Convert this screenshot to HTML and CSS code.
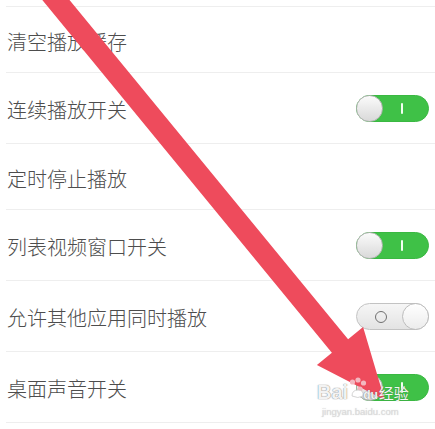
FILE: index.html
```html
<!DOCTYPE html>
<html lang="zh-CN">
<head>
<meta charset="utf-8">
<title>播放设置</title>
<link rel="stylesheet" href="styles.css">
</head>
<body>
<div class="screen">
  <ul class="settings">
    <li class="row row--plain"><span class="label">清空播放缓存</span></li>
    <li class="row"><span class="label">连续播放开关</span><span class="switch switch--on"><span class="knob"></span><span class="mark-on"></span></span></li>
    <li class="row row--plain"><span class="label">定时停止播放</span></li>
    <li class="row"><span class="label">列表视频窗口开关</span><span class="switch switch--on"><span class="knob"></span><span class="mark-on"></span></span></li>
    <li class="row"><span class="label">允许其他应用同时播放</span><span class="switch switch--off"><span class="mark-off"></span><span class="knob"></span></span></li>
    <li class="row"><span class="label">桌面声音开关</span><span class="switch switch--on"><span class="knob"></span><span class="mark-on"></span></span></li>
  </ul>

  <svg class="arrow" width="435" height="429" viewBox="0 0 435 429" aria-hidden="true">
    <polygon points="55.8,-16.7 348.1,339.3 363.1,326.9 384.7,399.9 316.9,365.1 331.9,352.7 39.6,-3.3" fill="#ee4b5c"/>
  </svg>

  <div class="watermark">
    <div class="wm-brand">
      <span class="wm-bai">Bai</span>
      <svg class="wm-paw" width="18" height="22" viewBox="0 0 18 22" aria-hidden="true">
        <circle cx="3.5" cy="5" r="2.6" fill="#f3b8c0"/>
        <circle cx="9" cy="3" r="2.6" fill="#f3b8c0"/>
        <circle cx="14.5" cy="6" r="2.6" fill="#f3b8c0"/>
        <circle cx="11" cy="12" r="2.6" fill="#f3b8c0"/>
        <path d="M3 19 q0-6 6-6 q6 0 5 6 q-5 3-11 0z" fill="#ffffff" stroke="#c9c9c9" stroke-width="0.8"/>
      </svg>
      <span class="wm-du">du</span>
      <span class="wm-jy">经验</span>
    </div>
    <div class="wm-url">jingyan.baidu.com</div>
  </div>
</div>
</body>
</html>
```

FILE: styles.css
```css
html, body {
  margin: 0;
  padding: 0;
  background: #ffffff;
}

.screen {
  position: relative;
  width: 435px;
  height: 429px;
  overflow: hidden;
  background: #ffffff;
  font-family: "Noto Sans CJK SC", "Noto Sans", sans-serif;
}

.settings {
  list-style: none;
  margin: 6px 0 0 6px;
  padding: 0;
  border-top: 1px solid #eeeeee;
}

.row {
  display: flex;
  align-items: center;
  justify-content: space-between;
  height: 70px;
  padding: 0 6px 0 1px;
  border-bottom: 1px solid #eeeeee;
}

.row--plain {
  height: 65px;
}

.label {
  font-size: 20px;
  line-height: 24px;
  padding-top: 4px;
  color: #4d4d4d;
  font-weight: 300;
}

.switch {
  box-sizing: border-box;
  display: flex;
  align-items: center;
  width: 73px;
  height: 27px;
  border-radius: 14px;
  margin-top: 1px;
}

.switch--on {
  background: #3fc147;
  border: 1px solid #3ab842;
}

.switch--off {
  background: linear-gradient(#f6f6f6, #e3e3e3);
  border: 1px solid #c3c3c3;
}

.knob {
  box-sizing: border-box;
  flex: none;
  width: 27px;
  height: 27px;
  border-radius: 50%;
  background: linear-gradient(#fbfbfb, #d9d9d9);
  border: 1px solid #b4b4b4;
  margin: -1px;
}

.switch--off .knob {
  background: linear-gradient(#ffffff, #ececec);
  border-color: #bdbdbd;
}

.mark-on {
  width: 2px;
  height: 11px;
  margin-left: 19px;
  background: #f2fff2;
  border-radius: 1px;
}

.mark-off {
  box-sizing: border-box;
  flex: none;
  width: 12px;
  height: 12px;
  margin-left: 18px;
  margin-right: auto;
  border-radius: 50%;
  border: 1.8px solid #707070;
}

.arrow {
  position: absolute;
  left: 0;
  top: 0;
}

.watermark {
  position: absolute;
  left: 317px;
  top: 377px;
  display: flex;
  flex-direction: column;
  align-items: flex-start;
}

.wm-brand {
  display: flex;
  align-items: flex-end;
  height: 26px;
}

.wm-bai,
.wm-du {
  font-family: "Liberation Sans", Arial, sans-serif;
  font-weight: bold;
  color: rgba(255, 255, 255, 0.92);
  text-shadow: 0 0 1px rgba(120, 120, 120, 0.8), 0 0 1px rgba(120, 120, 120, 0.8);
}

.wm-bai {
  font-size: 20px;
  line-height: 22px;
}

.wm-paw {
  margin: 0 -4px 0 1px;
  align-self: flex-start;
}

.wm-du {
  font-size: 12px;
  line-height: 16px;
}

.wm-jy {
  font-size: 15px;
  line-height: 20px;
  margin-left: 1px;
  color: rgba(255, 255, 255, 0.95);
  text-shadow: 0 0 1px rgba(90, 90, 90, 0.7);
}

.wm-url {
  margin-top: 3px;
  margin-left: 5px;
  font-family: "Liberation Sans", Arial, sans-serif;
  font-size: 9.5px;
  line-height: 11px;
  color: rgba(220, 220, 220, 0.9);
  text-shadow: 0 0 1px rgba(160, 160, 160, 0.5);
}
```
